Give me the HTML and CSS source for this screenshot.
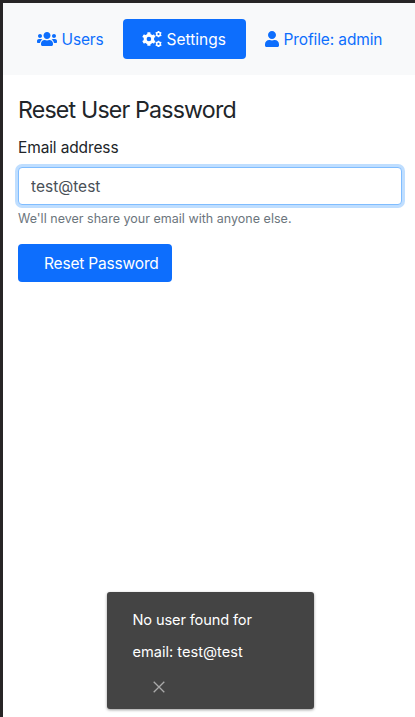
FILE: index.html
```html
<!DOCTYPE html>
<html lang="en">
<head>
<meta charset="utf-8">
<title>Reset User Password</title>
<link rel="stylesheet" href="styles.css">
</head>
<body>
<svg class="defs" width="0" height="0" aria-hidden="true">
  <defs>
    <mask id="gear-hole"><rect x="-10" y="-10" width="20" height="20" fill="white"/><circle r="2.3" fill="black"/></mask>
    <g id="gear" mask="url(#gear-hole)">
      <circle r="5.300"/>
      <g id="teeth"><rect x="-1.6" y="-6.8" width="3.2" height="13.6" rx=".6"/><rect x="-1.6" y="-6.8" width="3.2" height="13.6" rx=".6" transform="rotate(60)"/><rect x="-1.6" y="-6.8" width="3.2" height="13.6" rx=".6" transform="rotate(120)"/></g>
    </g>
  </defs>
</svg>
<nav class="nav">
  <a class="nav-link users">
    <svg width="20" height="16" viewBox="0 0 640 512" fill="currentColor"><path d="M96 224c35.300 0 64-28.700 64-64s-28.700-64-64-64-64 28.700-64 64 28.700 64 64 64zm448 0c35.300 0 64-28.700 64-64s-28.700-64-64-64-64 28.700-64 64 28.700 64 64 64zm32 32h-64c-17.600 0-33.500 7.100-45.100 18.600 40.300 22.100 68.900 62 75.100 109.400h66c17.700 0 32-14.300 32-32v-32c0-35.300-28.700-64-64-64zm-256 0c61.900 0 112-50.100 112-112S381.900 32 320 32 208 82.100 208 144s50.100 112 112 112zm76.800 32h-8.300c-20.800 10-43.900 16-68.500 16s-47.600-6-68.500-16h-8.300C179.600 288 128 339.600 128 403.200V432c0 26.500 21.500 48 48 48h288c26.500 0 48-21.500 48-48v-28.800c0-63.600-51.600-115.200-115.200-115.200zm-223.700-13.400C161.500 263.100 145.600 256 128 256H64c-35.300 0-64 28.700-64 64v32c0 17.700 14.300 32 32 32h65.900c6.300-47.400 34.900-87.300 75.200-109.400z"/></svg>
    <span>Users</span>
  </a>
  <a class="nav-link settings active">
    <svg width="20" height="16" viewBox="0 0 20 16" fill="currentColor"><use href="#gear" transform="translate(6.9 8)"/><use href="#gear" transform="translate(16.500 3.100) scale(.48)"/><use href="#gear" transform="translate(16.500 12.900) scale(.48)"/></svg>
    <span>Settings</span>
  </a>
  <a class="nav-link profile">
    <svg width="14" height="16" viewBox="0 0 448 512" fill="currentColor"><path d="M224 256c70.700 0 128-57.300 128-128S294.700 0 224 0 96 57.300 96 128s57.300 128 128 128zm89.600 32h-16.700c-22.200 10.200-46.900 16-72.900 16s-50.600-5.800-72.900-16h-16.700C60.200 288 0 348.200 0 422.400V464c0 26.500 21.500 48 48 48h352c26.500 0 48-21.500 48-48v-41.600c0-74.200-60.200-134.400-134.400-134.400z"/></svg>
    <span>Profile: admin</span>
  </a>
</nav>
<main class="content">
  <h1 class="title">Reset User Password</h1>
  <label class="label" for="email">Email address</label>
  <input class="input" id="email" type="text" value="test@test">
  <small class="help">We'll never share your email with anyone else.</small>
  <button class="submit" type="button">Reset Password</button>
</main>
<div class="toast">
  <div class="message">No user found for<br><span class="detail">email: test@test</span></div>
  <svg class="close" width="12" height="12" viewBox="0 0 12 12" fill="none" stroke="currentColor" stroke-width="1.300"><path d="M.7.7l10.600 10.600M11.300.7L.7 11.300"/></svg>
</div>
</body>
</html>
```
FILE: styles.css
```css
* { box-sizing: border-box; }
body {
  margin: 0;
  height: 717px;
  overflow: hidden;
  border-top: 3px solid #272526;
  border-left: 3px solid #272526;
  background: #fff;
  color: #212529;
  font: 400 15.5px/24px Inter, sans-serif;
  letter-spacing: -0.13px;
}
.defs { display: block; }
.nav {
  display: flex;
  height: 72px;
  padding: 16px 16px 16px 18px;
  background: #f8f9fa;
}
.nav-link {
  display: flex;
  align-items: center;
  height: 40px;
  color: #0d6efd;
  border-radius: 4px;
  white-space: nowrap;
}
.nav-link svg { flex: none; }
.nav-link span { padding-top: 2px; }
.users { width: 102px; padding-left: 16px; gap: 4.5px; }
.settings { width: 123px; padding-left: 19px; gap: 4.5px; letter-spacing: 0.02px; }
.profile { padding-left: 19px; gap: 4.5px; letter-spacing: -0.12px; }
.active { color: #fff; background: #0d6efd; }
.content {
  display: flex;
  flex-direction: column;
  align-items: flex-start;
  padding: 21px 13px 0 15px;
}
.title {
  margin: 0 0 11px;
  font-size: 23.2px;
  line-height: 29px;
  font-weight: 400;
  letter-spacing: -0.83px;
}
.label { height: 24px; margin-bottom: 7px; }
.input {
  width: 384px;
  height: 38px;
  padding: 0 12px;
  border: 1px solid #80bdff;
  border-radius: 4px;
  outline: none;
  box-shadow: 0 0 0 3px #bfdeff;
  color: #495057;
  font: inherit;
  letter-spacing: 0;
}
.help { margin-top: 4px; font-size: 12.5px; line-height: 19px; color: #6c757d; letter-spacing: 0.02px; }
.submit {
  width: 154px;
  height: 38px;
  margin-top: 16px;
  padding: 2px 0 0 26px;
  border: 0;
  border-radius: 4px;
  background: #0d6efd;
  color: #fff;
  font: inherit;
  letter-spacing: -0.18px;
  text-align: left;
}
.toast {
  position: absolute;
  left: 106.5px;
  top: 592px;
  width: 207px;
  height: 117px;
  padding: 12px 26px;
  border-radius: 3px;
  background: #444;
  color: #fff;
  box-shadow: 0 1px 3px rgba(0, 0, 0, .4);
}
.message { font-size: 14.6px; line-height: 32px; }
.detail { letter-spacing: 0; }
.close { display: block; margin: 13px 0 0 20px; color: #aaa; }
```
